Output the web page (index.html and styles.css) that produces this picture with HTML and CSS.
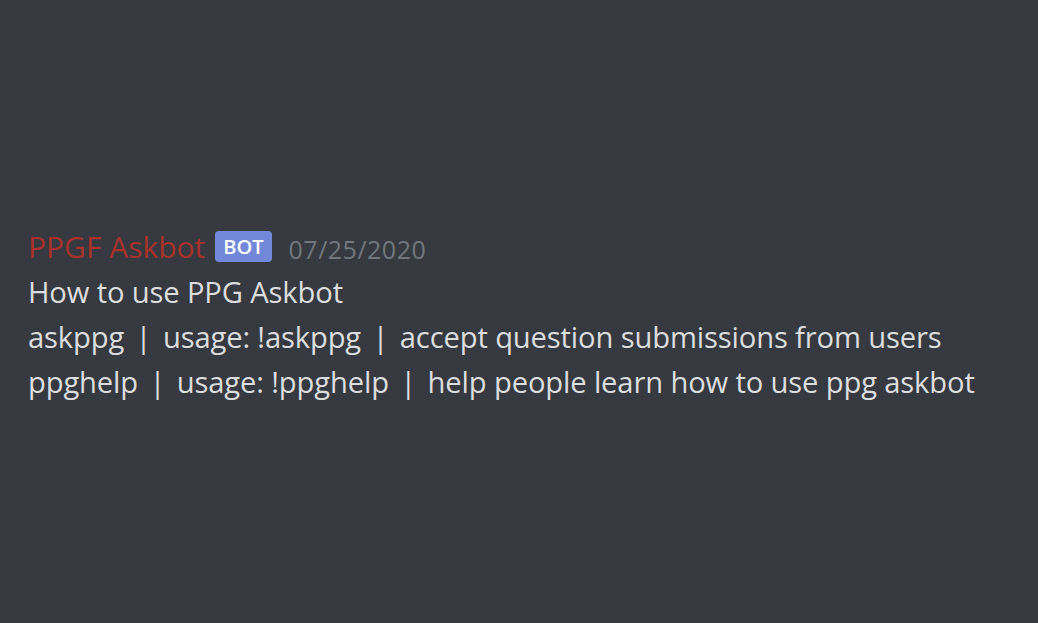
FILE: index.html
```html
<!DOCTYPE html>
<html>
<head>
<meta charset="utf-8">
<link rel="stylesheet" href="styles.css">
</head>
<body>
<div class="message">
  <div class="header">
    <span class="name">PPGF Askbot</span>
    <span class="badge">BOT</span>
    <span class="time">07/25/2020</span>
  </div>
  <div class="content">
    <div class="line">How to use PPG Askbot</div>
    <div class="line">askppg <span class="sep">|</span> usage: !askppg <span class="sep">|</span> accept question submissions from users</div>
    <div class="line">ppghelp <span class="sep">|</span> usage: !ppghelp <span class="sep">|</span> help people learn how to use ppg askbot</div>
  </div>
</div>
</body>
</html>
```
FILE: styles.css
```css
html, body {
  margin: 0;
  padding: 0;
  background: #36393f;
  height: 100%;
}
body {
  font-family: "Open Sans", "Noto Sans", sans-serif;
  color: #dcddde;
}
.message {
  padding: 223px 0 0 28px;
}
.header {
  display: flex;
  align-items: center;
  height: 47px;
}
.name {
  color: #a8322b;
  font-size: 30px;
}
.badge {
  background: #7289da;
  color: #fff;
  font-size: 20px;
  font-weight: 600;
  padding: 0 8px;
  height: 31px;
  line-height: 31px;
  border-radius: 4px;
  margin-left: 10px;
}
.time {
  color: #72767d;
  font-size: 25px;
  letter-spacing: 0.5px;
  margin-left: 17px;
  margin-top: 5px;
}
.content {
  font-size: 29.2px;
  letter-spacing: -0.15px;
  line-height: 45px;
}
.line {
  white-space: nowrap;
}
.sep {
  margin: 0 4px;
}
```
